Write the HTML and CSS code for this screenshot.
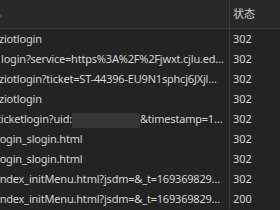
FILE: index.html
```html
<!DOCTYPE html>
<html lang="zh-CN">
<head>
    <meta charset="UTF-8">
    <title>Network</title>
    <link rel="stylesheet" href="styles.css">
</head>
<body>
    <div class="grid">
        <div class="head">
            <div class="cell name"><span class="rec"></span></div>
            <div class="cell status">状态</div>
        </div>
        <div class="row">
            <div class="cell name shift-1">ziotlogin</div>
            <div class="cell status">302</div>
        </div>
        <div class="row">
            <div class="cell name shift-0">login?service=https%3A%2F%2Fjwxt.cjlu.ed…</div>
            <div class="cell status">302</div>
        </div>
        <div class="row">
            <div class="cell name shift-1">ziotlogin?ticket=ST-44396-EU9N1sphcj6JXjl…</div>
            <div class="cell status">302</div>
        </div>
        <div class="row">
            <div class="cell name shift-1">ziotlogin</div>
            <div class="cell status">302</div>
        </div>
        <div class="row">
            <div class="cell name shift-2">ticketlogin?uid:<span class="blur"></span>&amp;timestamp=1…</div>
            <div class="cell status">302</div>
        </div>
        <div class="row">
            <div class="cell name shift-2">login_slogin.html</div>
            <div class="cell status">302</div>
        </div>
        <div class="row">
            <div class="cell name shift-2">login_slogin.html</div>
            <div class="cell status">302</div>
        </div>
        <div class="row">
            <div class="cell name shift-3">index_initMenu.html?jsdm=&amp;_t=169369829…</div>
            <div class="cell status">302</div>
        </div>
        <div class="row">
            <div class="cell name shift-3">index_initMenu.html?jsdm=&amp;_t=169369829…</div>
            <div class="cell status">200</div>
        </div>
    </div>
</body>
</html>
```

FILE: styles.css
```css
body {
    margin: 0;
    background-color: #232323;
    color: #d4d4d4;
    font-family: "Noto Sans", "Noto Sans CJK SC", sans-serif;
    font-size: 11px;
    overflow: hidden;
}

.grid {
    width: 280px;
}

.head,
.row {
    display: grid;
    grid-template-columns: 229px 51px;
}

.head {
    height: 28px;
    line-height: 28px;
    background-color: #292929;
    border-bottom: 1px solid #3c3c3c;
}

.row {
    height: 20px;
    line-height: 20px;
}

.cell {
    white-space: nowrap;
    overflow: hidden;
    min-width: 0;
}

.name {
    position: relative;
    letter-spacing: -0.2px;
}

.status {
    border-left: 1px solid #3c3c3c;
    padding-left: 3px;
}

.head .status {
    color: #cfcfcf;
}

.shift-0 {
    text-indent: 1px;
}

.shift-1 {
    text-indent: -1px;
}

.shift-2 {
    text-indent: -3px;
}

.shift-3 {
    text-indent: -3px;
}

.blur {
    display: inline-block;
    width: 68px;
    height: 15px;
    vertical-align: middle;
    background-color: #363636;
}

.rec {
    position: absolute;
    left: -2px;
    top: 15px;
    width: 3px;
    height: 2px;
    background-color: #b03040;
}
```
